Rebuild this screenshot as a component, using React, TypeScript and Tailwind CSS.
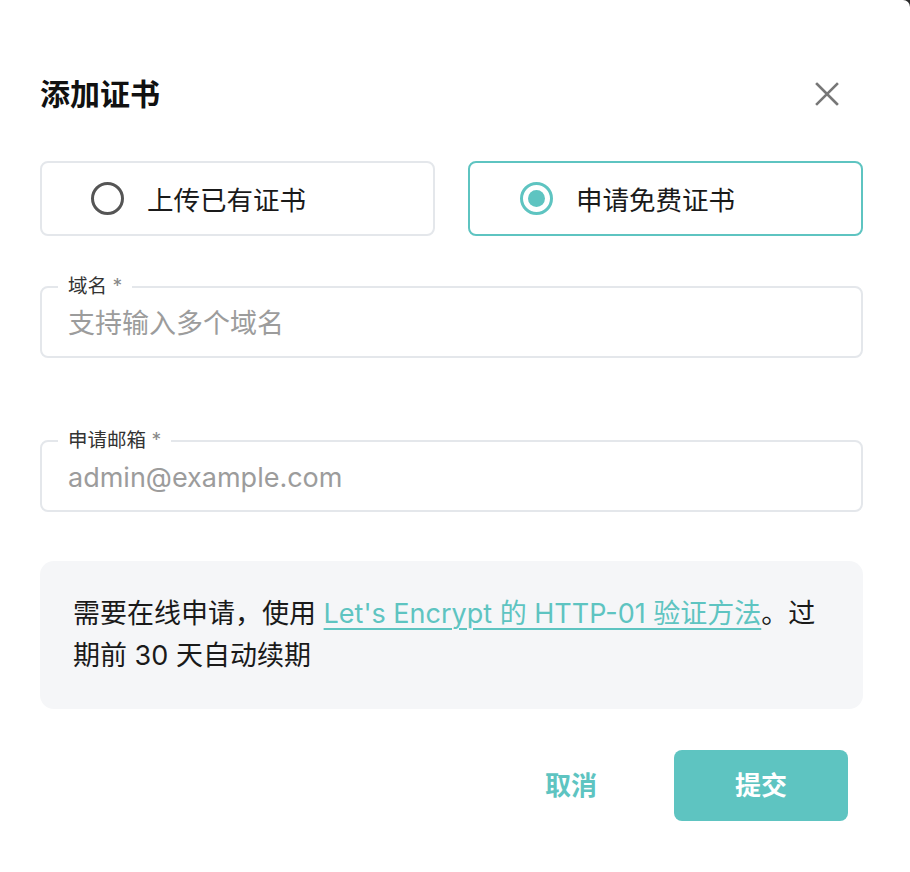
import React, { useState } from 'react'

const TEAL = '#5ec4c1'

function Radio({ checked }: { checked: boolean }) {
    return checked ? (
        <span className="flex h-[33px] w-[33px] shrink-0 items-center justify-center rounded-full border-[3.5px] border-[#5ec4c1]">
            <span className="h-[17px] w-[17px] rounded-full bg-[#5ec4c1]" />
        </span>
    ) : (
        <span className="h-[33px] w-[33px] shrink-0 rounded-full border-[3.5px] border-[#555555]" />
    )
}

function OutlinedField({ label, placeholder }: { label: string; placeholder: string }) {
    return (
        <div className="relative h-[72px] rounded-lg border-2 border-[#e4e7eb]">
            {/* floating label sits on the top border */}
            <span className="absolute -top-[14px] left-[16px] bg-white px-[10px] text-[19.5px] leading-[24px] text-[#333]">
                {label} <span className="text-[#888]">*</span>
            </span>
            <input
                className="h-full w-full bg-transparent px-[26px] pt-[3px] text-[27px] text-[#222] outline-none placeholder:text-[#9c9c9c]"
                placeholder={placeholder}
            />
        </div>
    )
}

export default function App() {
    const [mode, setMode] = useState<'upload' | 'free'>('free')

    return (
        <div className="h-[872px] w-[910px] overflow-hidden bg-[#2b2b2b]">
            <div
                className="h-[872px] w-[910px] rounded-tr-[7px] bg-white pl-[40px] pr-[47px] pt-[72px] text-[#1a1a1a]"
                style={{ fontFamily: 'Inter, "Noto Sans CJK SC", sans-serif' }}
            >
                <header className="flex h-[44px] items-center justify-between">
                    <h1 className="text-[30px] font-bold leading-[44px] text-[#111]">添加证书</h1>
                    <button className="mr-[21px] flex h-[30px] w-[30px] items-center justify-center">
                        <svg width="24" height="24" viewBox="0 0 24 24" fill="none" stroke="#777" strokeWidth="2.6" strokeLinecap="square">
                            <path d="M2 2 22 22M22 2 2 22" />
                        </svg>
                    </button>
                </header>

                <div className="mt-[45px] grid grid-cols-2 gap-[33px]">
                    <button
                        onClick={() => setMode('upload')}
                        className={`flex h-[75px] items-center gap-[23px] rounded-lg border-2 pl-[49px] ${mode === 'upload' ? 'border-[#5ec4c1]' : 'border-[#e4e7eb]'}`}
                    >
                        <Radio checked={mode === 'upload'} />
                        <span className="pt-[3px] text-[26.5px] leading-none">上传已有证书</span>
                    </button>
                    <button
                        onClick={() => setMode('free')}
                        className={`flex h-[75px] items-center gap-[23px] rounded-lg border-2 pl-[50px] ${mode === 'free' ? 'border-[#5ec4c1]' : 'border-[#e4e7eb]'}`}
                    >
                        <Radio checked={mode === 'free'} />
                        <span className="pt-[3px] text-[26.5px] leading-none">申请免费证书</span>
                    </button>
                </div>

                <div className="mt-[50px]">
                    <OutlinedField label="域名" placeholder="支持输入多个域名" />
                </div>
                <div className="mt-[82px]">
                    <OutlinedField label="申请邮箱" placeholder="admin@example.com" />
                </div>

                <div className="mt-[49px] rounded-[14px] bg-[#f5f6f8] px-[33px] py-[32px] text-[27px] leading-[42px]">
                    需要在线申请，使用{' '}
                    <a href="#" className="underline decoration-[2px] underline-offset-[5px]" style={{ color: TEAL }}>
                        Let's Encrypt 的 HTTP-01 验证方法
                    </a>
                    。过期前 30 天自动续期
                </div>

                <div className="mt-[41px] flex justify-end gap-4 pr-[15px]">
                    <button className="h-[71px] w-[174px] text-[26px] font-bold text-[#5ec4c1]">取消</button>
                    <button className="h-[71px] w-[174px] rounded-lg bg-[#5ec4c1] text-[26px] font-bold text-white">提交</button>
                </div>
            </div>
        </div>
    )
}
